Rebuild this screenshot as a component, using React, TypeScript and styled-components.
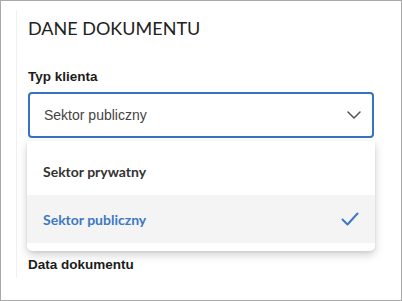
import styled, { createGlobalStyle } from 'styled-components';

const options = [
  { name: 'Sektor prywatny', selected: false },
  { name: 'Sektor publiczny', selected: true },
];

const GlobalStyle = createGlobalStyle`
  html, body {
    margin: 0;
    padding: 0;
    background: #ffffff;
  }
  * {
    box-sizing: border-box;
  }
`;

const Frame = styled.div`
  width: 402px;
  height: 301px;
  border: 1px solid #a9a9a9;
  background: #ffffff;
  overflow: hidden;
  padding: 9px 0 0 15px;
`;

const Panel = styled.div`
  width: 373px;
  height: 268px;
  border-left: 1px solid #f0f0f0;
  padding: 0 0 0 11px;
`;

const Title = styled.h2`
  margin: 0;
  padding-top: 7px;
  font-family: Lato, "Open Sans", sans-serif;
  font-weight: 400;
  font-size: 18px;
  line-height: 22px;
  color: #222222;
`;

const Label = styled.div<{ $gap: number }>`
  margin-top: ${(p) => p.$gap}px;
  font-family: "Liberation Sans", Arial, sans-serif;
  font-weight: 700;
  font-size: 13.5px;
  line-height: 16px;
  color: #1c1c1c;
`;

const Field = styled.div`
  position: relative;
  margin-top: 7px;
  width: 346px;
`;

const SelectBox = styled.div`
  display: flex;
  align-items: center;
  justify-content: space-between;
  height: 46px;
  padding: 0 11px 0 14px;
  border: 2px solid #3873bf;
  border-radius: 4px;
  font-family: "Liberation Sans", Arial, sans-serif;
  font-size: 14px;
  color: #444444;
`;

const Menu = styled.div`
  position: absolute;
  top: 49px;
  left: -1px;
  right: -1px;
  padding: 6px 0 8px;
  background: #ffffff;
  border-radius: 0 0 5px 5px;
  box-shadow: 0 4px 10px rgba(0, 0, 0, 0.18), 0 1px 3px rgba(0, 0, 0, 0.08);
  z-index: 10;
`;

const Option = styled.div<{ $selected: boolean }>`
  display: flex;
  align-items: center;
  justify-content: space-between;
  height: 48px;
  padding: 0 16px 0 16px;
  background: ${(p) => (p.$selected ? '#f4f4f5' : '#ffffff')};
  color: ${(p) => (p.$selected ? '#3d78c2' : '#333333')};
  font-family: Lato, "Open Sans", sans-serif;
  font-weight: 700;
  font-size: 14px;
`;

const Chevron = () => (
  <svg width="14" height="8" viewBox="0 0 14 8" fill="none">
    <path d="M1 1l6 6 6-6" stroke="#555" strokeWidth="1.5" strokeLinecap="round" strokeLinejoin="round" />
  </svg>
);

const Check = () => (
  <svg width="18" height="14" viewBox="0 0 18 14" fill="none">
    <path d="M1.5 7.5l5 5 10-11" stroke="#3d78c2" strokeWidth="2" strokeLinecap="round" strokeLinejoin="round" />
  </svg>
);

const App = () => {
  return (
    <>
      <GlobalStyle />
      <Frame>
        <Panel>
          <Title>DANE DOKUMENTU</Title>
          <Label $gap={30}>Typ klienta</Label>
          <Field>
            <SelectBox>
              <span>Sektor publiczny</span>
              <Chevron />
            </SelectBox>
            <Menu>
              {options.map((item, index) => (
                <Option key={index} $selected={item.selected}>
                  <span>{item.name}</span>
                  {item.selected && <Check />}
                </Option>
              ))}
            </Menu>
          </Field>
          <Label $gap={119}>Data dokumentu</Label>
        </Panel>
      </Frame>
    </>
  );
};

export default App;
